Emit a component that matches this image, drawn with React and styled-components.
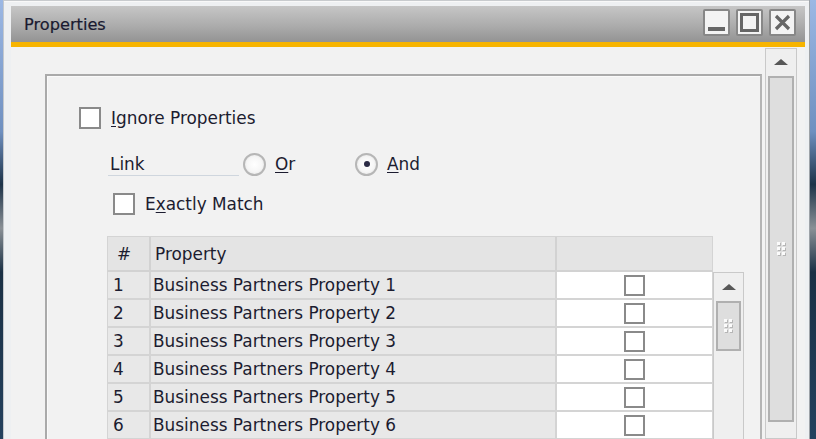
import React from 'react';
import styled, { createGlobalStyle } from 'styled-components';

const GlobalStyle = createGlobalStyle`
  html, body { margin: 0; padding: 0; }
  body {
    width: 816px;
    height: 439px;
    overflow: hidden;
    background: linear-gradient(180deg, #9cb8e4 0%, #6f90c0 30%, #1d3349 42%, #8a9096 52%, #1a3045 62%, #24415e 100%);
    font-family: "DejaVu Sans", Verdana, sans-serif;
  }
`;

const Window = styled.div`
  margin-left: 3px;
  width: 807px;
  height: 439px;
  box-sizing: border-box;
  padding: 6px 4px 0 7px;
  background: #eef0f2;
  border-left: 1px solid #c4c8cc;
  border-right: 1px solid #9ea3a8;
  display: flex;
  flex-direction: column;
  overflow: hidden;
  box-shadow: inset 0 1px 0 #c8cbce, inset 0 2px 0 #f8f8f8;
`;

const TitleBar = styled.div`
  height: 36px;
  flex: none;
  display: flex;
  align-items: flex-start;
  padding: 0 9px 0 13px;
  background: linear-gradient(180deg, #c6c6c6 0%, #acacac 55%, #939393 100%);
  border-bottom: 5px solid #f7b400;
`;

const Title = styled.div`
  margin-top: 9px;
  font-size: 16.2px;
  color: #1a1a30;
  -webkit-text-stroke: 0.2px #1a1a30;
`;

const Buttons = styled.div`
  margin-left: auto;
  margin-top: 3px;
  display: flex;
  gap: 6px;
`;

const WinButton = styled.div`
  width: 27px;
  height: 27px;
  box-sizing: border-box;
  border: 2px solid #878787;
  border-radius: 2px;
  background: #f3f3f3;
  display: flex;
  align-items: center;
  justify-content: center;
`;

const Body = styled.div`
  flex: 1;
  display: flex;
  background: #f2f2f2;
  padding-right: 8px;
  min-height: 0;
  overflow: hidden;
`;

const Content = styled.div`
  flex: 1;
  padding: 27px 3px 0 34px;
  min-width: 0;
`;

const GroupBox = styled.div`
  height: 400px;
  box-sizing: border-box;
  border: 2px solid #aaaaaa;
  border-right-color: #b4b4b4;
  box-shadow: inset 1px 1px 0 #fafafa;
  display: flex;
  flex-direction: column;
`;

const Row = styled.div`
  display: flex;
  align-items: center;
  height: ${p => p.$h}px;
  margin-top: ${p => p.$top}px;
  padding-left: ${p => p.$left}px;
  font-size: 16.9px;
  color: #1c1c30;
`;

const Box = styled.div`
  width: ${p => p.$size || 22}px;
  height: ${p => p.$size || 22}px;
  box-sizing: border-box;
  border: 2px solid #8a8a8a;
  background: #ffffff;
  flex: none;
`;

const Label = styled.span`
  margin-left: ${p => p.$gap}px;
  white-space: nowrap;
  u { text-decoration-thickness: 1px; text-underline-offset: 2px; }
`;

const LinkLabel = styled.div`
  width: 131px;
  height: 24px;
  box-sizing: border-box;
  padding-left: 2px;
  border-bottom: 1px solid #cfd6de;
  display: flex;
  align-items: center;
`;

const Option = styled.div`
  display: flex;
  align-items: center;
  width: ${p => p.$w}px;
  margin-left: ${p => p.$ml || 0}px;
`;

const Radio = styled.div`
  width: 23px;
  height: 23px;
  box-sizing: border-box;
  border-radius: 50%;
  border: 2px solid #b6b6b6;
  background: radial-gradient(circle, #ffffff 0%, #f6f6f6 55%, #dcdcdc 100%);
  display: flex;
  align-items: center;
  justify-content: center;
  flex: none;
  &::after {
    content: '';
    width: 6px;
    height: 6px;
    border-radius: 50%;
    background: #2a2a44;
    display: ${p => (p.$on ? 'block' : 'none')};
  }
`;

const Grid = styled.div`
  margin-top: 21px;
  padding-left: 60px;
  display: flex;
  flex-direction: column;
`;

const columns = '41px 406px 158px';

const HeadRow = styled.div`
  display: grid;
  grid-template-columns: ${columns};
  width: 606px;
  height: 36px;
  box-sizing: border-box;
  border: 1px solid #d4d4d4;
  border-bottom: 2px solid #d2d2d2;
  background: #e4e4e4;
`;

const HeadCell = styled.div`
  display: flex;
  align-items: center;
  padding-left: ${p => p.$pad}px;
  font-size: 16.9px;
  color: #1c1c30;
  border-left: ${p => (p.$first ? 'none' : '2px solid #d2d2d2')};
`;

const GridBody = styled.div`
  display: flex;
`;

const Rows = styled.div`
  width: 606px;
  display: flex;
  flex-direction: column;
`;

const DataRow = styled.div`
  display: grid;
  grid-template-columns: ${columns};
  height: 28px;
  box-sizing: border-box;
  border-left: 1px solid #d4d4d4;
  border-bottom: 2px solid #d4d4d4;
`;

const Cell = styled.div`
  display: flex;
  align-items: center;
  justify-content: ${p => (p.$center ? 'center' : 'flex-start')};
  padding-left: ${p => p.$pad || 0}px;
  background: ${p => (p.$white ? '#ffffff' : '#e8e8e8')};
  border-left: ${p => (p.$first ? 'none' : '2px solid #d4d4d4')};
  border-right: ${p => (p.$white ? '1px solid #d4d4d4' : 'none')};
  font-size: 16.9px;
  color: #1c1c30;
  white-space: nowrap;
`;

const ScrollTrack = styled.div`
  width: ${p => p.$w}px;
  box-sizing: border-box;
  margin-left: ${p => p.$ml || 0}px;
  margin-top: ${p => p.$mt || 0}px;
  border: 1px solid #c9c9c9;
  background: #efefef;
  padding: 1px 2px;
  display: flex;
  flex-direction: column;
  gap: 2px;
  flex: none;
`;

const ArrowButton = styled.div`
  height: ${p => p.$h}px;
  display: flex;
  align-items: center;
  justify-content: center;
  &::before {
    content: '';
    border-left: 7px solid transparent;
    border-right: 7px solid transparent;
    border-bottom: 6px solid #575757;
  }
`;

const Thumb = styled.div`
  height: ${p => p.$h}px;
  box-sizing: border-box;
  border: 2px solid #b0b0b0;
  background: #dedede;
  display: flex;
  align-items: center;
  justify-content: center;
`;

const Grip = () => (
  <svg width="9" height="14" viewBox="0 0 9 14">
    {[0, 1].map(c =>
      [0, 1, 2].map(r => (
        <g key={`${c}${r}`}>
          <rect x={c * 5 + 1} y={r * 5 + 1} width="3" height="3" fill="#b6b6b6" />
          <rect x={c * 5} y={r * 5} width="3" height="3" fill="#fbfbfb" />
        </g>
      ))
    )}
  </svg>
);

const rows = [1, 2, 3, 4, 5, 6];

export default function App() {
  return (
    <>
      <GlobalStyle />
      <Window>
        <TitleBar>
          <Title>Properties</Title>
          <Buttons>
            <WinButton>
              <svg width="19" height="19" viewBox="0 0 19 19">
                <rect x="1" y="14" width="17" height="4" fill="#666" />
              </svg>
            </WinButton>
            <WinButton>
              <svg width="19" height="19" viewBox="0 0 19 19">
                <rect x="1.5" y="1.5" width="16" height="16" fill="none" stroke="#666" strokeWidth="3" />
              </svg>
            </WinButton>
            <WinButton>
              <svg width="19" height="19" viewBox="0 0 19 19">
                <path d="M3 3 L16 16 M16 3 L3 16" stroke="#666" strokeWidth="3.2" />
              </svg>
            </WinButton>
          </Buttons>
        </TitleBar>
        <Body>
          <Content>
            <GroupBox>
              <Row $h={22} $top={31} $left={32}>
                <Box />
                <Label $gap={10}>
                  <u>I</u>gnore Properties
                </Label>
              </Row>
              <Row $h={24} $top={23} $left={61}>
                <LinkLabel>Link</LinkLabel>
                <Option $w={112} $ml={4}>
                  <Radio />
                  <Label $gap={9}>
                    <u>O</u>r
                  </Label>
                </Option>
                <Option $w={100}>
                  <Radio $on />
                  <Label $gap={9}>
                    <u>A</u>nd
                  </Label>
                </Option>
              </Row>
              <Row $h={22} $top={17} $left={66}>
                <Box />
                <Label $gap={10}>
                  E<u>x</u>actly Match
                </Label>
              </Row>
              <Grid>
                <HeadRow>
                  <HeadCell $first $pad={9}>#</HeadCell>
                  <HeadCell $pad={4}>Property</HeadCell>
                  <HeadCell />
                </HeadRow>
                <GridBody>
                  <Rows>
                    {rows.map(n => (
                      <DataRow key={n}>
                        <Cell $first $pad={5}>{n}</Cell>
                        <Cell $pad={2}>Business Partners Property {n}</Cell>
                        <Cell $white $center>
                          <Box $size={21} />
                        </Cell>
                      </DataRow>
                    ))}
                  </Rows>
                  <ScrollTrack $w={31}>
                    <ArrowButton $h={25} />
                    <Thumb $h={50}>
                      <Grip />
                    </Thumb>
                  </ScrollTrack>
                </GridBody>
              </Grid>
            </GroupBox>
          </Content>
          <ScrollTrack $w={32} $mt={1}>
            <ArrowButton $h={24} />
            <Thumb $h={346}>
              <Grip />
            </Thumb>
          </ScrollTrack>
        </Body>
      </Window>
    </>
  );
}
